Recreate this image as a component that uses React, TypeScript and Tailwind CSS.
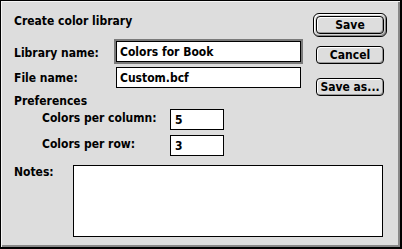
import React from "react";

const font = "font-['DejaVu_Sans_Condensed','DejaVu_Sans',sans-serif] font-bold text-[12px] leading-[14px] text-black";

// plain Mac OS 8 push button
const Button: React.FC<{ label: string; className?: string }> = ({ label, className = "" }) => (
  <button
    className={`w-[68px] h-[18px] rounded-[4px] border border-black bg-[#dddddd] shadow-[inset_1px_1px_0_#ffffff,inset_-1px_-1px_0_#999999] flex items-center justify-center ${font} ${className}`}
  >
    {label}
  </button>
);

const Field: React.FC<{ value: string; className?: string }> = ({ value, className = "" }) => (
  <div className={`h-[21px] border border-black bg-white pt-[3px] ${font} ${className}`}>{value}</div>
);

const App: React.FC = () => {
  return (
    <div
      className={`w-[402px] h-[249px] bg-[#dddddd] border-l border-t border-r-2 border-b-2 border-black shadow-[inset_1px_1px_0_#f4f4f4,inset_-2px_-2px_0_#888888] flex flex-col ${font}`}
    >
      {/* Top area: fields + buttons */}
      <div className="flex">
        <div className="flex-1 flex flex-col pl-[13px] pt-[13px]">
          <div>Create color library</div>

          <div className="flex mt-[11px]">
            <div className="w-[100px] mt-[7px]">Library name:</div>
            <div className="w-[189px] h-[25px] border-2 border-[#7a7a7a]">
              <Field value="Colors for Book" className="pl-[3px]" />
            </div>
          </div>

          <div className="flex mt-[3px]">
            <div className="w-[102px] mt-[4px]">File name:</div>
            <Field value="Custom.bcf" className="w-[185px] pl-[3px]" />
          </div>

          <div className="mt-[6px]">Preferences</div>
        </div>

        {/* Buttons */}
        <div className="w-[74px] mr-[13px] flex flex-col items-center">
          <div className="mt-[12px] rounded-[6px] border border-black p-[2px] bg-[#d4d4d4] shadow-[inset_1px_1px_0_#ffffff,inset_-1px_-1px_0_#888888]">
            <Button label="Save" />
          </div>
          <Button label="Cancel" className="mt-[9px]" />
          <Button label="Save as..." className="mt-[14px]" />
        </div>
      </div>

      {/* Preferences rows */}
      <div className="flex flex-col pl-[41px]">
        <div className="flex mt-[1px]">
          <div className="w-[128px] mt-[2px]">Colors per column:</div>
          <Field value="5" className="w-[54px] pl-[4px]" />
        </div>
        <div className="flex mt-[5px]">
          <div className="w-[128px] mt-[2px]">Colors per row:</div>
          <Field value="3" className="w-[54px] pl-[4px]" />
        </div>
      </div>

      {/* Notes */}
      <div className="flex pl-[13px] mt-[9px]">
        <div className="w-[59px]">Notes:</div>
        <div className="w-[310px] h-[72px] border border-black bg-white" />
      </div>
    </div>
  );
};

export default App;
